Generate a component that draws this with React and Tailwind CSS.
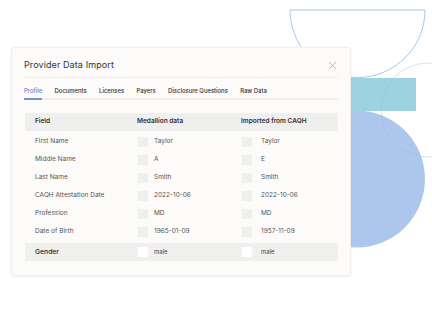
const tabs = ['Profile', 'Documents', 'Licenses', 'Payers', 'Disclosure Questions', 'Raw Data'];

const rows = [
  { field: 'First Name', a: 'Taylor', b: 'Taylor' },
  { field: 'Middle Name', a: 'A', b: 'E' },
  { field: 'Last Name', a: 'Smith', b: 'Smith' },
  { field: 'CAQH Attestation Date', a: '2022-10-06', b: '2022-10-06' },
  { field: 'Profession', a: 'MD', b: 'MD' },
  { field: 'Date of Birth', a: '1965-01-09', b: '1957-11-09' },
];

function Backdrop() {
  return (
    <svg className="absolute inset-0" width="432" height="320" viewBox="0 0 432 320">
      <path d="M290 10 A67.5 67.5 0 0 0 425 10 Z" fill="none" stroke="#a9c5ef" strokeWidth="1" />
      <rect x="330" y="78" width="86" height="33" fill="#9dd3e0" />
      <circle cx="356.5" cy="179" r="68.5" fill="#adc7ec" />
      <circle cx="428" cy="110" r="47" fill="none" stroke="#8fbde0" strokeOpacity="0.55" strokeWidth="0.8" />
    </svg>
  );
}

function Box({ white }) {
  return <span className={`w-[10px] h-[10px] shrink-0 ${white ? 'bg-white' : 'bg-[#efefee]'}`} />;
}

export default function App() {
  return (
    <div className="relative w-[432px] h-[320px] bg-white overflow-hidden font-['Inter',sans-serif]">
      <Backdrop />

      <div className="relative z-10 ml-[11px] mt-[47px] w-[340px] rounded-[3px] bg-[#fcfbf9] border border-[#f1efec] shadow-[0_1px_3px_rgba(0,0,0,0.06)] px-[12px] pt-[10px] pb-[14px]">
        {/* Header */}
        <div className="flex items-center justify-between h-[14px]">
          <h1 className="text-[9px] leading-[14px] text-[#333] tracking-[0.1px]">Provider Data Import</h1>
          <svg width="9" height="9" viewBox="0 0 9 9" className="mr-[1px]">
            <path d="M1 1 L8 8 M8 1 L1 8" stroke="#b5b5b5" strokeWidth="0.9" />
          </svg>
        </div>
        <div className="mt-[5px] h-px bg-[#eeece9]" />

        {/* Tabs */}
        <div className="flex gap-[12.4px] mt-[7px] border-b-2 border-[#efedea]">
          {tabs.map((t, i) => (
            <div
              key={t}
              className={`text-[5.9px] leading-[12px] font-medium pb-[1px] -mb-[2px] border-b-2 ${
                i === 0 ? 'text-[#5b85d0] border-[#6f93d6]' : 'text-[#2f2f2f] border-transparent'
              }`}
            >
              {t}
            </div>
          ))}
        </div>

        {/* Table */}
        <div className="mt-[13px] ml-[1px] text-[6.5px]">
          <div className="flex items-center h-[18px] bg-[#efefee] font-semibold text-[#333]">
            <div className="w-[112px] pl-[10px]">Field</div>
            <div className="w-[104px]">Medallion data</div>
            <div className="flex-1">Imported from CAQH</div>
          </div>

          <div className="mt-[2px]">
            {rows.map((r) => (
              <div key={r.field} className="flex items-center h-[18px] text-[#555]">
                <div className="w-[112px] pl-[10px]">{r.field}</div>
                <div className="w-[104px] flex items-center gap-[6px] pl-[1px]">
                  <Box />
                  <span>{r.a}</span>
                </div>
                <div className="flex-1 flex items-center gap-[9px] pl-[1px]">
                  <Box />
                  <span>{r.b}</span>
                </div>
              </div>
            ))}
          </div>

          <div className="flex items-center h-[18px] mt-[2px] bg-[#f0f0ef]">
            <div className="w-[112px] pl-[10px] font-medium text-[#222] text-[6.8px]">Gender</div>
            <div className="w-[104px] flex items-center gap-[6px] pl-[1px] text-[#444] text-[6px]">
              <Box white />
              <span className="-mt-[2px]">male</span>
            </div>
            <div className="flex-1 flex items-center gap-[9px] pl-[1px] text-[#444] text-[6px]">
              <Box white />
              <span className="-mt-[2px]">male</span>
            </div>
          </div>
        </div>
      </div>
    </div>
  );
}
